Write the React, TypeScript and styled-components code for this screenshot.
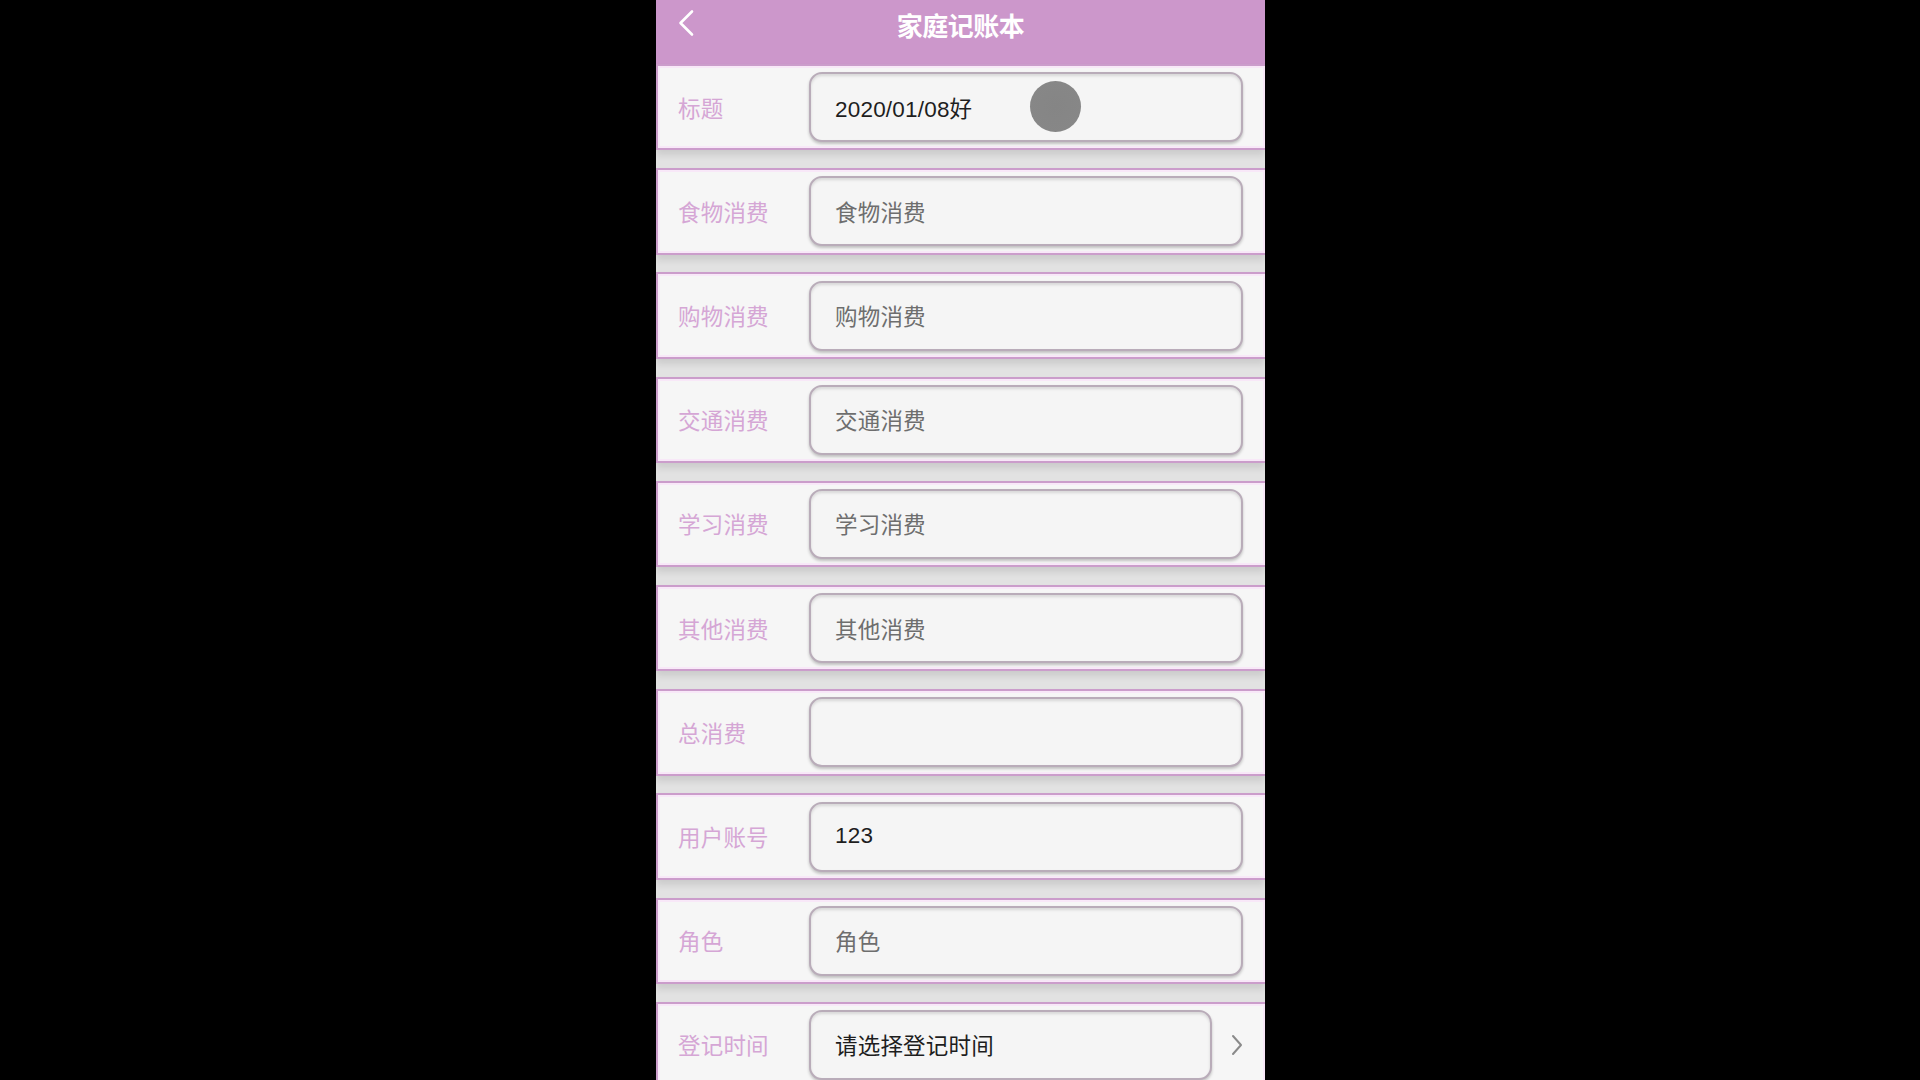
import React from "react";
import styled, { createGlobalStyle } from "styled-components";

const GlobalStyle = createGlobalStyle`
  html, body {
    margin: 0;
    padding: 0;
    background: #000;
  }
  body {
    font-family: "Liberation Sans", "Noto Sans CJK SC", sans-serif;
  }
  * { box-sizing: border-box; }
`;

const Page = styled.div`
  width: 100%;
  height: 1080px;
  background: #000;
  display: flex;
  justify-content: center;
  overflow: hidden;
`;

const Phone = styled.div`
  position: relative;
  width: 609px;
  height: 1080px;
  margin-left: 1px;
  background: #e2e2e2;
  overflow: hidden;
  display: flex;
  flex-direction: column;
`;

const Header = styled.header`
  height: 64px;
  flex: none;
  background: #cc97cb;
  display: grid;
  grid-template-columns: 60px 1fr 60px;
  align-items: center;
`;

const BackButton = styled.div`
  display: flex;
  align-items: center;
  padding-left: 21px;
  height: 100%;
  padding-bottom: 18px;
`;

const Title = styled.h1`
  margin: 0;
  text-align: center;
  color: #fff;
  font-size: 26px;
  font-weight: 700;
  line-height: 1;
  padding-bottom: 14px;
  font-family: "Noto Sans CJK SC", sans-serif;
  letter-spacing: -0.5px;
`;

const Form = styled.div`
  display: flex;
  flex-direction: column;
  gap: 17.8px;
`;

const Row = styled.div`
  height: 86.4px;
  flex: none;
  display: flex;
  align-items: center;
  background: #f6f6f6;
  border: 2.5px solid #cb9dcb;
  border-right: none;
  box-shadow: inset 0 0 0 2px #f8e8f8, 0 5px 7px rgba(0, 0, 0, 0.1);
  padding-left: 20px;
`;

const Label = styled.div`
  width: 131px;
  flex: none;
  color: #d5a6d5;
  font-size: 22.5px;
  font-family: "Noto Sans CJK SC", sans-serif;
  letter-spacing: 0.2px;
  margin-top: -1px;
`;

const Field = styled.div<{ $narrow?: boolean }>`
  width: ${(p) => (p.$narrow ? "403px" : "434px")};
  height: 70px;
  flex: none;
  display: flex;
  align-items: center;
  padding-left: 24px;
  border-radius: 13px;
  background: #f5f5f5;
  border: 2px solid #b9acb9;
  box-shadow: inset 0 2px 3px rgba(0, 0, 0, 0.12), 0 2px 3px rgba(0, 0, 0, 0.22);
  font-size: 22.5px;
`;

const Value = styled.span<{ $placeholder?: boolean }>`
  color: ${(p) => (p.$placeholder ? "#6e6e6e" : "#1e1e1e")};
  font-family: "Liberation Sans", "Noto Sans CJK SC", sans-serif;
  letter-spacing: 0.2px;
  margin-top: -1px;
`;

const Chevron = styled.div`
  display: flex;
  align-items: center;
  padding-left: 18px;
`;

const Touch = styled.div`
  position: absolute;
  left: 374px;
  top: 81px;
  width: 51px;
  height: 51px;
  border-radius: 50%;
  background: radial-gradient(circle, #858585 0%, #878787 76%, #a3a3a3 88%, rgba(190, 190, 190, 0.4) 100%);
`;

type Item = { label: string; value: string; placeholder?: boolean; picker?: boolean };

const items: Item[] = [
  { label: "标题", value: "2020/01/08好" },
  { label: "食物消费", value: "食物消费", placeholder: true },
  { label: "购物消费", value: "购物消费", placeholder: true },
  { label: "交通消费", value: "交通消费", placeholder: true },
  { label: "学习消费", value: "学习消费", placeholder: true },
  { label: "其他消费", value: "其他消费", placeholder: true },
  { label: "总消费", value: "" },
  { label: "用户账号", value: "123" },
  { label: "角色", value: "角色", placeholder: true },
  { label: "登记时间", value: "请选择登记时间", picker: true },
];

export default function App() {
  return (
    <>
      <GlobalStyle />
      <Page>
        <Phone>
          <Header>
            <BackButton>
              <svg width="18" height="28" viewBox="0 0 18 28" fill="none">
                <path d="M15 2.5 L3.5 14 L15 25.5" stroke="#fff" strokeWidth="2.6" strokeLinecap="round" strokeLinejoin="round" />
              </svg>
            </BackButton>
            <Title>家庭记账本</Title>
            <div />
          </Header>
          <Form>
            {items.map((it) => (
              <Row key={it.label}>
                <Label>{it.label}</Label>
                <Field $narrow={it.picker}>
                  <Value $placeholder={it.placeholder}>{it.value}</Value>
                </Field>
                {it.picker && (
                  <Chevron>
                    <svg width="14" height="24" viewBox="0 0 14 24" fill="none">
                      <path d="M3 3 L11 12 L3 21" stroke="#8a8a8a" strokeWidth="2" strokeLinecap="round" strokeLinejoin="round" />
                    </svg>
                  </Chevron>
                )}
              </Row>
            ))}
          </Form>
          <Touch />
        </Phone>
      </Page>
    </>
  );
}
